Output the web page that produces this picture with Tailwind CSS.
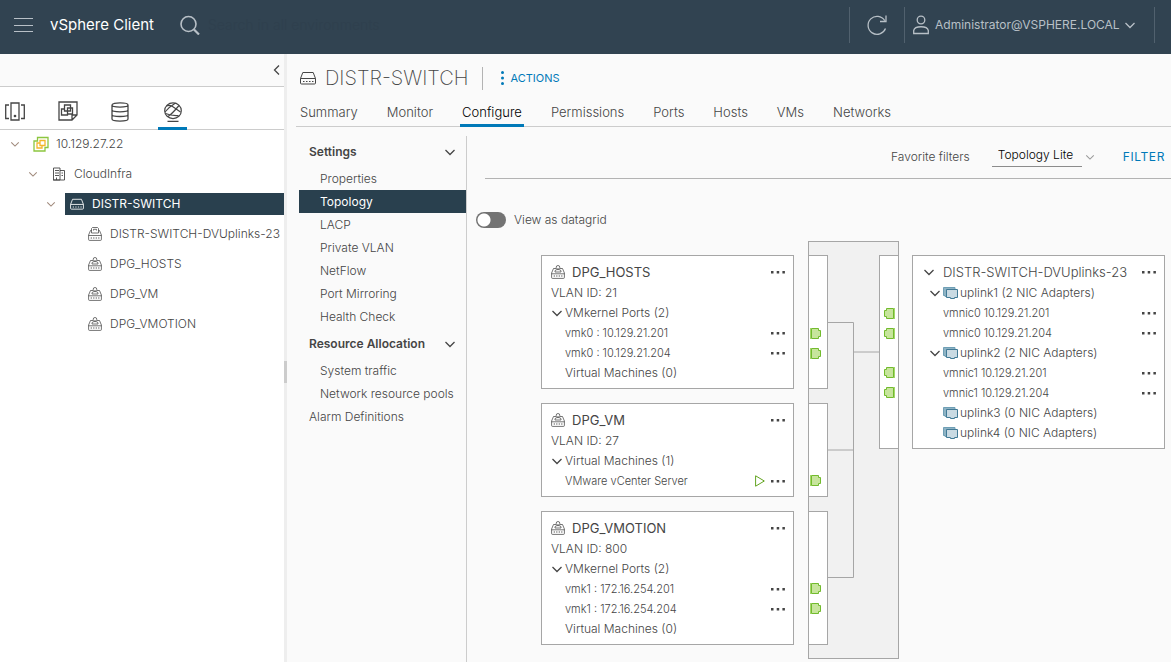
<!DOCTYPE html>
<html lang="en">
<head>
<meta charset="utf-8">
<title>vSphere Client</title>
<script src="https://cdn.jsdelivr.net/npm/@tailwindcss/browser@4"></script>
</head>
<body class="flex min-h-screen flex-col overflow-x-hidden bg-[#fafafa] font-['Inter','Open_Sans',sans-serif] text-xs font-light text-[#454545]">

<svg class="hidden" aria-hidden="true">
  <symbol id="chev" viewBox="0 0 12 12"><path d="M1.500 4 6 8.500 10.500 4" fill="none" stroke="currentColor" stroke-width="1.300"/></symbol>
  <symbol id="dots" viewBox="0 0 14 4"><path d="M0 1h2.500v2.500H0zM5.700 1h2.500v2.500H5.700zM11.400 1h2.500v2.500h-2.500z" fill="currentColor"/></symbol>
  <symbol id="switch" viewBox="0 0 16 14"><g fill="none" stroke="currentColor"><path d="M2.800 1.500h10.400l2.300 6v4.500q0 1-1 1h-13q-1 0-1-1V7.500z"/><path d="M.5 7.500h15"/><path d="M3 10.500h10.500" stroke-dasharray="1.500 1.500"/></g></symbol>
  <symbol id="group" viewBox="0 0 14 14"><g fill="none" stroke="currentColor" stroke-width=".75"><circle cx="7" cy="2.300" r="1.800"/><path d="M4 7V6q0-1.500 3-1.500T10 6v1zM5 3.500H2.500L.6 8v4.500q0 .9.900.9h11q.9 0 .9-.9V8l-1.900-4.500H9M.6 8.800h12.800"/><path d="M2.700 11h9" stroke-dasharray="1.200 1.300" stroke-width="1.200"/></g></symbol>
  <symbol id="uplinks" viewBox="0 0 14 14"><g fill="none" stroke="currentColor" stroke-width=".75"><path d="M3.500 6V1.500l1-1h5l1 1V6zM5.500 3.500V2.300h3v1.200"/><path d="M3.500 3.500h-1L.6 8v4.500q0 .9.900.9h11q.9 0 .9-.9V8l-1.900-4.500h-1M.6 8.500h12.800"/><path d="M2.700 11h9" stroke-dasharray="1.200 1.300" stroke-width="1.200"/></g></symbol>
  <symbol id="nic" viewBox="0 0 15 12"><path d="M.5.500h11.500v2H3.500v7H2V8.500H.5z" fill="#8fb3c4" stroke="#6f9fb5"/><path d="M3.500 2.500h11v8h-3v1h-4v-1h-4z" fill="#c9dae3" stroke="#427a96"/></symbol>
  <symbol id="port" viewBox="0 0 12 12"><path d="M1.500.500h7v2h2v6h-2v2h-7z" fill="#c7e59c" stroke="#72bb2d"/><path d="M.5 0v11" stroke="#a5d76a"/></symbol>
</svg>

<header class="flex h-[54px] items-center bg-[#314351] pb-1 text-[#b8c0c7]">
  <button aria-label="Menu" class="ml-3.5"><svg class="h-5 w-[19px]" viewBox="0 0 19 20" fill="none" stroke="currentColor" stroke-width="1.200"><path d="M0 3.500h19M0 10.500h19M0 16.500h19"/></svg></button>
  <h1 class="ml-[17px] text-[15px] font-normal whitespace-nowrap text-white">vSphere Client</h1>
  <label for="search" class="ml-[26px]"><svg class="h-5 w-5" viewBox="0 0 20 20" fill="none" stroke="currentColor" stroke-width="1.600" role="img" aria-label="Search"><circle cx="8.500" cy="9" r="7.500"/><path d="m14 14.500 5 5" stroke-width="2.200"/></svg></label>
  <input id="search" class="ml-2 w-56 bg-transparent text-sm outline-none placeholder:text-[#2f404e]" placeholder="Search in all environments">
  <div class="ml-auto flex h-9 items-center">
    <button aria-label="Refresh" class="flex h-full w-[55px] items-center justify-center border-l border-[#51616e]"><svg class="h-[22px] w-[22px]" viewBox="0 0 22 22" fill="none" stroke="currentColor" stroke-width="1.300"><path d="M19.500 14.500a9 9 0 1 1-.8-8M20 1.500v6h-6"/></svg></button>
    <button class="flex h-full w-[251px] items-center border-x border-[#51616e] pl-2"><svg class="h-5 w-4" viewBox="0 0 16 20" fill="none" stroke="currentColor" stroke-width="1.300"><circle cx="8" cy="5" r="3.800"/><path d="M.7 18.500v-3c1-5 13.600-5 14.600 0v3z"/></svg><span class="ml-1.5 text-xs font-normal">Administrator@VSPHERE.LOCAL</span><svg class="ml-1 h-3 w-3"><use href="#chev"/></svg></button>
    <div class="w-4"></div>
  </div>
</header>

<div class="flex flex-1">
  <aside class="flex w-[284px] shrink-0 flex-col bg-white">
    <div class="flex h-[33px] items-center justify-end border-b border-[#ccc] bg-[#fafafa]">
      <button aria-label="Collapse" class="pr-px"><svg class="h-3 w-3 rotate-90"><use href="#chev"/></svg></button>
    </div>
    <nav class="flex h-[43px] border-b border-[#ccc]" aria-label="Inventories">
      <a href="#" aria-label="Hosts and Clusters" class="mr-[23px] flex w-[30px] items-center justify-center pt-2"><svg class="h-5 w-5" viewBox="0 0 20 20" fill="none" stroke="currentColor" stroke-width="1.300"><path d="M6 1h8v17H6zM4 3H.7v13.500H4M16 3h3.300v13.500H16"/><circle cx="10" cy="14" r=".7" fill="currentColor"/></svg></a>
      <a href="#" aria-label="VMs and Templates" class="mr-[23px] flex w-[29px] items-center justify-center pt-1.5"><svg class="h-5 w-5" viewBox="0 0 20 20" fill="none" stroke="currentColor" stroke-width="1.300"><path d="M1 1h18v13l-5 5H1zM19 14h-5v5M6.500 4h6v6h-6zM9.500 7h5v6h-5zM6.500 8h-3v6h6v-1"/></svg></a>
      <a href="#" aria-label="Storage" class="mr-6 flex w-[29px] items-center justify-center pt-2"><svg class="h-5 w-[18px]" viewBox="0 0 18 20" fill="none" stroke="currentColor" stroke-width="1.300"><path d="M1 3c0-2.800 16-2.800 16 0v14c0 2.800-16 2.800-16 0zM1 3c0 2.800 16 2.800 16 0M1 7.700c0 2.800 16 2.800 16 0M1 12.400c0 2.800 16 2.800 16 0"/></svg></a>
      <a href="#" aria-label="Networking" aria-current="page" class="-mb-px flex w-[29px] items-center justify-center border-b-3 border-[#0079b8] pt-2.5"><svg class="h-5 w-5" viewBox="0 0 20 20" fill="none" stroke="currentColor" stroke-width="1.200"><ellipse cx="10" cy="8.700" rx="8.300" ry="7.900"/><path d="M4.500 19.400h11M3.500 4q3-1.500 6 .5T17.500 10M5 14.500Q9 12 16 3.500M2 10q4-5 10.500-9M2.500 11.500q6 2.500 13 2"/></svg></a>
    </nav>
    <ul class="-mt-px text-xs leading-[30px] whitespace-nowrap">
      <li class="flex h-[30px] items-center pl-2.5"><svg class="h-2.5 w-2.5 text-[#a08a7c]"><use href="#chev"/></svg><svg class="ml-[13px] h-4 w-4" viewBox="0 0 16 16" fill="none" stroke-width="1.300"><path d="M4.500 1.500h10.500v10h-3V15H1V5h3.500z" stroke="#8cc63f"/><path d="M7 4.500h5v5H7zM7 7H4v5h5V9.500" stroke="#f3b62a"/></svg><a href="#" class="ml-[7px]">10.129.27.22</a></li>
      <li class="flex h-[30px] items-center pl-7"><svg class="h-2.5 w-2.5 text-[#a08a7c]"><use href="#chev"/></svg><svg class="ml-[15px] h-[14px] w-3" viewBox="0 0 12 14" fill="none" stroke="currentColor" stroke-width=".9"><path d="M.5 13V1h6.500v12zM7 3.500h4.500V13H0M2 3.500h4M2 6h4M2 8.500h4M8.500 6H10M8.500 8.500H10M3.500 13v-2.500"/></svg><a href="#" class="ml-[9px]">CloudInfra</a></li>
      <li class="flex h-[30px] items-center pl-[46px]"><svg class="h-2.5 w-2.5 text-[#a08a7c]"><use href="#chev"/></svg><a href="#" class="ml-[9px] flex h-[22px] flex-1 items-center bg-[#29404e] pl-[5px] font-normal text-white"><svg class="mr-2 h-3 w-3.5"><use href="#switch"/></svg>DISTR-SWITCH</a></li>
      <li class="flex h-[30px] items-center pl-[88px]"><svg class="h-3.5 w-3.5"><use href="#uplinks"/></svg><a href="#" class="ml-2">DISTR-SWITCH-DVUplinks-23</a></li>
      <li class="flex h-[30px] items-center pl-[88px]"><svg class="h-3.5 w-3.5"><use href="#group"/></svg><a href="#" class="ml-2">DPG_HOSTS</a></li>
      <li class="flex h-[30px] items-center pl-[88px]"><svg class="h-3.5 w-3.5"><use href="#group"/></svg><a href="#" class="ml-2">DPG_VM</a></li>
      <li class="flex h-[30px] items-center pl-[88px]"><svg class="h-3.5 w-3.5"><use href="#group"/></svg><a href="#" class="ml-2">DPG_VMOTION</a></li>
    </ul>
  </aside>
  <div class="w-[3px] shrink-0 bg-[#eee] pt-[307px]"><div class="h-[22px] bg-[#ccc]"></div></div>

  <main class="flex min-w-0 flex-1 flex-col">
    <div class="flex h-12 items-center pl-[13px]">
      <svg class="h-[14px] w-4"><use href="#switch"/></svg>
      <h2 class="ml-[9px] text-xl font-extralight whitespace-nowrap">DISTR-SWITCH</h2>
      <div class="ml-3.5 h-[23px] w-px bg-[#b3b3b3]"></div>
      <button class="ml-[18px] flex items-center text-[11px] font-normal text-[#0079b8]"><svg class="mr-1.5 h-3.5 w-[3px]" viewBox="0 0 3 14" fill="currentColor"><circle cx="1.500" cy="1.500" r="1.500"/><circle cx="1.500" cy="7" r="1.500"/><circle cx="1.500" cy="12.500" r="1.500"/></svg>ACTIONS</button>
    </div>
    <nav class="ml-[9px] flex h-[25px] gap-[25px] border-b border-[#ccc] pl-0.5 text-[13px] leading-5 whitespace-nowrap" aria-label="Object">
      <a href="#" class="px-0.5">Summary</a>
      <a href="#" class="px-0.5">Monitor</a>
      <a href="#" aria-current="page" class="-mb-px border-b-3 border-[#0079b8] px-0.5 text-black">Configure</a>
      <a href="#" class="px-0.5">Permissions</a>
      <a href="#" class="px-0.5">Ports</a>
      <a href="#" class="px-0.5">Hosts</a>
      <a href="#" class="px-0.5">VMs</a>
      <a href="#" class="px-0.5">Networks</a>
    </nav>

    <div class="mt-[9px] flex flex-1">
      <nav class="ml-3 w-[168px] shrink-0 border-r border-[#ccc] text-xs leading-[23px] whitespace-nowrap" aria-label="Configure">
        <button class="flex h-[31px] w-full items-center justify-between pr-2.5 pl-2.5 font-semibold">Settings<svg class="h-3 w-3"><use href="#chev"/></svg></button>
        <a href="#" class="block pl-[21px]">Properties</a>
        <a href="#" aria-current="page" class="block bg-[#29404e] pl-[21px] font-normal text-white">Topology</a>
        <a href="#" class="block pl-[21px]">LACP</a>
        <a href="#" class="block pl-[21px]">Private VLAN</a>
        <a href="#" class="block pl-[21px]">NetFlow</a>
        <a href="#" class="block pl-[21px]">Port Mirroring</a>
        <a href="#" class="block pl-[21px]">Health Check</a>
        <button class="flex h-[31px] w-full items-center justify-between pr-2.5 pl-2.5 font-semibold">Resource Allocation<svg class="h-3 w-3"><use href="#chev"/></svg></button>
        <a href="#" class="block pl-[21px]">System traffic</a>
        <a href="#" class="block pl-[21px]">Network resource pools</a>
        <a href="#" class="block pl-2.5">Alarm Definitions</a>
      </nav>

      <section class="min-w-0 flex-1">
        <div class="ml-[18px] flex h-[43px] items-center justify-end border-b border-[#b3b3b3] pr-1.5 whitespace-nowrap">
          <label for="fav" class="mr-[22px] text-xs">Favorite filters</label>
          <div class="flex items-center"><select id="fav" class="-mt-1 h-6 w-[90px] appearance-none border-b border-[#8c8c8c] pl-1.5 text-xs text-black"><option>Topology Lite</option></select><svg class="ml-[3px] h-2.5 w-2.5 text-[#9a9a9a]"><use href="#chev"/></svg></div>
          <button class="ml-7 text-xs font-normal tracking-wider text-[#0079b8]">FILTER</button>
        </div>
        <div class="flex h-[62px] items-center pt-6 pb-1 pl-[9px]">
          <label class="flex items-center gap-2 text-xs"><input type="checkbox" role="switch" class="h-4 w-[30px] appearance-none rounded-full bg-[#737373] bg-[radial-gradient(circle_at_8px_8px,#fff_6px,transparent_7px)]">View as datagrid</label>
        </div>

        <div class="flex items-start pr-1.5 pb-[3px] pl-[74px]">
          <div class="mt-3.5 flex min-w-0 flex-1 flex-col gap-3.5 text-xs leading-5 whitespace-nowrap">
            <article class="border border-[#a6a6a6] bg-white py-[5px] pr-2 pl-[9px]">
              <h3 class="flex h-[22px] items-center text-[13px] font-normal"><svg class="mr-[7px] h-3.5 w-3.5"><use href="#group"/></svg>DPG_HOSTS<button aria-label="More" class="ml-auto"><svg class="h-1 w-3.5"><use href="#dots"/></svg></button></h3>
              <p>VLAN ID: 21</p>
              <button class="flex items-center"><svg class="mr-0.5 h-3 w-3"><use href="#chev"/></svg>VMkernel Ports (2)</button>
              <div class="flex items-center pl-3.5 text-[11px] leading-5">vmk0 : 10.129.21.201<button aria-label="More" class="ml-auto"><svg class="h-1 w-3.5"><use href="#dots"/></svg></button></div>
              <div class="flex items-center pl-3.5 text-[11px] leading-5">vmk0 : 10.129.21.204<button aria-label="More" class="ml-auto"><svg class="h-1 w-3.5"><use href="#dots"/></svg></button></div>
              <p class="pl-3.5">Virtual Machines (0)</p>
            </article>
            <article class="border border-[#a6a6a6] bg-white py-[5px] pr-2 pl-[9px]">
              <h3 class="flex h-[22px] items-center text-[13px] font-normal"><svg class="mr-[7px] h-3.5 w-3.5"><use href="#group"/></svg>DPG_VM<button aria-label="More" class="ml-auto"><svg class="h-1 w-3.5"><use href="#dots"/></svg></button></h3>
              <p>VLAN ID: 27</p>
              <button class="flex items-center"><svg class="mr-0.5 h-3 w-3"><use href="#chev"/></svg>Virtual Machines (1)</button>
              <div class="flex items-center pl-3.5 text-[11px] leading-5">VMware vCenter Server<svg class="mr-1.5 ml-auto h-3 w-2.5" viewBox="0 0 10 12" role="img" aria-label="Powered on"><path d="M.6.800v10.400L9.300 6z" fill="none" stroke="#62a420"/></svg><button aria-label="More"><svg class="h-1 w-3.5"><use href="#dots"/></svg></button></div>
            </article>
            <article class="border border-[#a6a6a6] bg-white py-[5px] pr-2 pl-[9px]">
              <h3 class="flex h-[22px] items-center text-[13px] font-normal"><svg class="mr-[7px] h-3.5 w-3.5"><use href="#group"/></svg>DPG_VMOTION<button aria-label="More" class="ml-auto"><svg class="h-1 w-3.5"><use href="#dots"/></svg></button></h3>
              <p>VLAN ID: 800</p>
              <button class="flex items-center"><svg class="mr-0.5 h-3 w-3"><use href="#chev"/></svg>VMkernel Ports (2)</button>
              <div class="flex items-center pl-3.5 text-[11px] leading-5">vmk1 : 172.16.254.201<button aria-label="More" class="ml-auto"><svg class="h-1 w-3.5"><use href="#dots"/></svg></button></div>
              <div class="flex items-center pl-3.5 text-[11px] leading-5">vmk1 : 172.16.254.204<button aria-label="More" class="ml-auto"><svg class="h-1 w-3.5"><use href="#dots"/></svg></button></div>
              <p class="pl-3.5">Virtual Machines (0)</p>
            </article>
          </div>

          <div class="mr-[13px] ml-3.5 flex w-[91px] shrink-0 items-start border border-[#a6a6a6] bg-[#f1f1f1] py-[13px]">
            <div class="flex w-[19px] flex-col gap-3.5">
              <div class="flex h-[134px] flex-col gap-2 border-y border-r border-[#a6a6a6] bg-white pt-[72px] pl-px"><svg class="h-3 w-3"><use href="#port"/></svg><svg class="h-3 w-3"><use href="#port"/></svg></div>
              <div class="flex h-[94px] flex-col border-y border-r border-[#a6a6a6] bg-white pt-[71px] pl-px"><svg class="h-3 w-3"><use href="#port"/></svg></div>
              <div class="flex h-[134px] flex-col gap-2 border-y border-r border-[#a6a6a6] bg-white pt-[71px] pl-px"><svg class="h-3 w-3"><use href="#port"/></svg><svg class="h-3 w-3"><use href="#port"/></svg></div>
            </div>
            <svg class="h-[390px] w-[51px]" viewBox="0 0 51 390" fill="none" stroke="#a6a6a6"><path d="M0 67.500h25.500v255H0M0 195h25.500M25.500 97H51"/></svg>
            <div class="flex h-[194px] flex-1 flex-col gap-2 border-y border-l border-[#a6a6a6] bg-white pt-[51px] pl-[3px]"><svg class="h-3 w-3 rotate-180"><use href="#port"/></svg><svg class="h-3 w-3 rotate-180"><use href="#port"/></svg><svg class="mt-[19px] h-3 w-3 rotate-180"><use href="#port"/></svg><svg class="h-3 w-3 rotate-180"><use href="#port"/></svg></div>
          </div>

          <div class="mt-3.5 min-w-0 flex-1 text-xs leading-5 whitespace-nowrap">
            <article class="border border-[#a6a6a6] bg-white py-[5px] pr-2 pl-2.5">
              <h3 class="flex h-[22px] items-center text-[13px] font-light"><svg class="mr-2 h-3 w-3"><use href="#chev"/></svg>DISTR-SWITCH-DVUplinks-23<button aria-label="More" class="ml-auto"><svg class="h-1 w-3.5"><use href="#dots"/></svg></button></h3>
              <button class="flex items-center pl-1.5"><svg class="mr-0.5 h-3 w-3"><use href="#chev"/></svg><svg class="mr-0.5 h-3 w-[15px]"><use href="#nic"/></svg>uplink1 (2 NIC Adapters)</button>
              <div class="flex items-center pl-5 text-[11px] leading-5">vmnic0 10.129.21.201<button aria-label="More" class="ml-auto"><svg class="h-1 w-3.5"><use href="#dots"/></svg></button></div>
              <div class="flex items-center pl-5 text-[11px] leading-5">vmnic0 10.129.21.204<button aria-label="More" class="ml-auto"><svg class="h-1 w-3.5"><use href="#dots"/></svg></button></div>
              <button class="flex items-center pl-1.5"><svg class="mr-0.5 h-3 w-3"><use href="#chev"/></svg><svg class="mr-0.5 h-3 w-[15px]"><use href="#nic"/></svg>uplink2 (2 NIC Adapters)</button>
              <div class="flex items-center pl-5 text-[11px] leading-5">vmnic1 10.129.21.201<button aria-label="More" class="ml-auto"><svg class="h-1 w-3.5"><use href="#dots"/></svg></button></div>
              <div class="flex items-center pl-5 text-[11px] leading-5">vmnic1 10.129.21.204<button aria-label="More" class="ml-auto"><svg class="h-1 w-3.5"><use href="#dots"/></svg></button></div>
              <p class="flex items-center pl-5"><svg class="mr-0.5 h-3 w-[15px]"><use href="#nic"/></svg>uplink3 (0 NIC Adapters)</p>
              <p class="flex items-center pl-5"><svg class="mr-0.5 h-3 w-[15px]"><use href="#nic"/></svg>uplink4 (0 NIC Adapters)</p>
            </article>
          </div>
        </div>
      </section>
    </div>
  </main>
</div>
</body>
</html>
